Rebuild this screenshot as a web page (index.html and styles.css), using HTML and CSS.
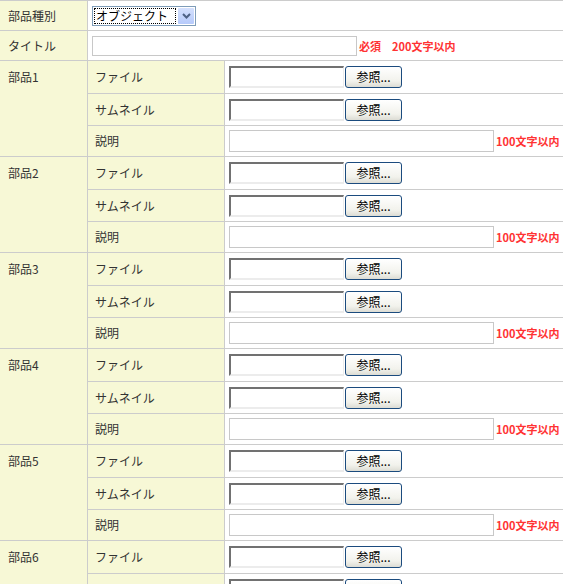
FILE: index.html
```html
<!DOCTYPE html>
<html lang="ja">
<head>
<meta charset="utf-8">
<title>部品登録</title>
<link rel="stylesheet" href="styles.css">
</head>
<body>
<div class="form">
  <div class="h c1">部品種別</div>
  <div class="v span">
    <span class="select"><span class="sel-val"><span class="focus">オブジェクト</span></span><span class="sel-btn"><svg width="9" height="6" viewBox="0 0 9 6"><path d="M1 1 L4.5 4.5 L8 1" fill="none" stroke="#4d6185" stroke-width="2"/></svg></span></span>
  </div>
  <div class="h c1">タイトル</div>
  <div class="v span"><span class="text title"></span><span class="note">必須　200文字以内</span></div>

  <div class="h c1 part">部品1</div>
  <div class="h sub">ファイル</div><div class="v"><span class="file"></span><span class="btn">参照...</span></div>
  <div class="h sub">サムネイル</div><div class="v"><span class="file"></span><span class="btn">参照...</span></div>
  <div class="h sub">説明</div><div class="v"><span class="text desc"></span><span class="note">100文字以内</span></div>

  <div class="h c1 part">部品2</div>
  <div class="h sub">ファイル</div><div class="v"><span class="file"></span><span class="btn">参照...</span></div>
  <div class="h sub">サムネイル</div><div class="v"><span class="file"></span><span class="btn">参照...</span></div>
  <div class="h sub">説明</div><div class="v"><span class="text desc"></span><span class="note">100文字以内</span></div>

  <div class="h c1 part">部品3</div>
  <div class="h sub">ファイル</div><div class="v"><span class="file"></span><span class="btn">参照...</span></div>
  <div class="h sub">サムネイル</div><div class="v"><span class="file"></span><span class="btn">参照...</span></div>
  <div class="h sub">説明</div><div class="v"><span class="text desc"></span><span class="note">100文字以内</span></div>

  <div class="h c1 part">部品4</div>
  <div class="h sub">ファイル</div><div class="v"><span class="file"></span><span class="btn">参照...</span></div>
  <div class="h sub">サムネイル</div><div class="v"><span class="file"></span><span class="btn">参照...</span></div>
  <div class="h sub">説明</div><div class="v"><span class="text desc"></span><span class="note">100文字以内</span></div>

  <div class="h c1 part">部品5</div>
  <div class="h sub">ファイル</div><div class="v"><span class="file"></span><span class="btn">参照...</span></div>
  <div class="h sub">サムネイル</div><div class="v"><span class="file"></span><span class="btn">参照...</span></div>
  <div class="h sub">説明</div><div class="v"><span class="text desc"></span><span class="note">100文字以内</span></div>

  <div class="h c1 part">部品6</div>
  <div class="h sub">ファイル</div><div class="v"><span class="file"></span><span class="btn">参照...</span></div>
  <div class="h sub">サムネイル</div><div class="v"><span class="file"></span><span class="btn">参照...</span></div>
  <div class="h sub">説明</div><div class="v"><span class="text desc"></span><span class="note">100文字以内</span></div>
</div>
</body>
</html>
```

FILE: styles.css
```css
html, body {
  margin: 0;
  padding: 0;
  overflow: hidden;
  background: #fff;
}
body {
  font-family: "Noto Sans CJK JP", "Noto Sans", "DejaVu Sans", sans-serif;
  font-size: 12px;
  color: #333;
}
.form {
  display: grid;
  grid-template-columns: 87px 136px 1fr;
  grid-template-rows: 29px 29px repeat(6, 32px 31px 30px);
  gap: 1px;
  padding-top: 1px;
  background: #cccccc;
  width: 563px;
}
.h {
  background: #f7f8d6;
  display: flex;
  align-items: center;
  line-height: 16px;
}
.c1 {
  grid-column: 1;
  padding-left: 8px;
}
.part {
  grid-row: span 3;
  align-items: flex-start;
  padding-top: 8px;
}
.sub {
  grid-column: 2;
  padding-left: 7px;
}
.v {
  grid-column: 3;
  background: #fff;
  display: flex;
  align-items: center;
  padding-left: 4px;
}
.span {
  grid-column: 2 / 4;
}
.select {
  display: flex;
  box-sizing: border-box;
  width: 104px;
  height: 20px;
  border: 1px solid #7f9db9;
  background: #fff;
}
.sel-val {
  flex: 1;
  display: flex;
  padding: 1px;
}
.focus {
  flex: 1;
  border: 1px dotted #000;
  line-height: 14px;
  padding-left: 1px;
  color: #000;
}
.sel-btn {
  width: 16px;
  margin: 1px;
  background: linear-gradient(#d4e0fd, #b6cafb);
  border-radius: 1px;
  display: flex;
  align-items: center;
  justify-content: center;
}
.text {
  display: block;
  box-sizing: border-box;
  width: 265px;
  border: 1px solid #c8c8c8;
  background: #fff;
}
.title {
  height: 20px;
}
.desc {
  height: 22px;
}
.note {
  color: #ff3333;
  font-weight: bold;
  font-size: 11px;
  margin-left: 2px;
  white-space: nowrap;
}
.file {
  display: block;
  box-sizing: border-box;
  width: 115px;
  height: 22px;
  border-top: 2px solid #717171;
  border-left: 2px solid #717171;
  border-bottom: 2px solid #ececec;
  border-right: 1px solid #ececec;
  background: #fff;
}
.btn {
  box-sizing: border-box;
  width: 57px;
  height: 22px;
  margin-left: 1px;
  border: 1px solid #1b4b7e;
  border-radius: 3px;
  background: linear-gradient(#ffffff, #f2f2ec 70%, #dcdcd4);
  color: #000;
  display: flex;
  align-items: center;
  justify-content: center;
  padding-bottom: 1px;
}
```
